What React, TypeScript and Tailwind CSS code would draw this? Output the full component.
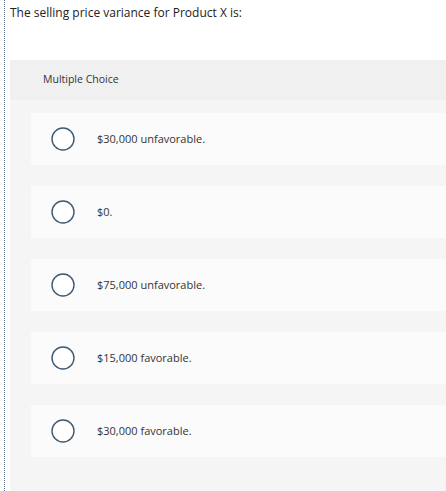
import React from "react";

const options = [
  "$30,000 unfavorable.",
  "$0.",
  "$75,000 unfavorable.",
  "$15,000 favorable.",
  "$30,000 favorable.",
];

const Radio = () => (
  <svg width="24" height="24" viewBox="0 0 24 24" className="shrink-0">
    <circle cx="12" cy="12" r="11" fill="#ffffff" stroke="#3f5a72" strokeWidth="1.4" />
  </svg>
);

const App = () => {
  return (
    <div
      className="flex h-[491px] w-[446px] overflow-hidden bg-white"
      style={{ fontFamily: '"Open Sans", "Liberation Sans", Arial, sans-serif' }}
    >
      <div className="ml-[4px] h-full border-l border-dotted border-[#5b6f8c]" />
      <div className="flex flex-1 flex-col pl-[5px]">
        <div className="h-[60px] pt-[5px] text-[12px] leading-[16px] text-[#222]">
          The selling price variance for Product X is:
        </div>
        <div className="flex flex-1 flex-col bg-[#f5f5f5]">
          <div className="flex h-[40px] items-center bg-[#f0f0f0] pl-[33px] text-[10.5px] text-[#333]">
            Multiple Choice
          </div>
          <div className="flex flex-col gap-[21px] pl-[21px] pt-[13px]">
            {options.map((o) => (
              <div
                key={o}
                className="flex h-[52px] items-center bg-[#fbfbfb] pl-[20px]"
              >
                <Radio />
                <span className="ml-[22px] text-[11px] text-[#333]">{o}</span>
              </div>
            ))}
          </div>
        </div>
      </div>
    </div>
  );
};

export default App;
